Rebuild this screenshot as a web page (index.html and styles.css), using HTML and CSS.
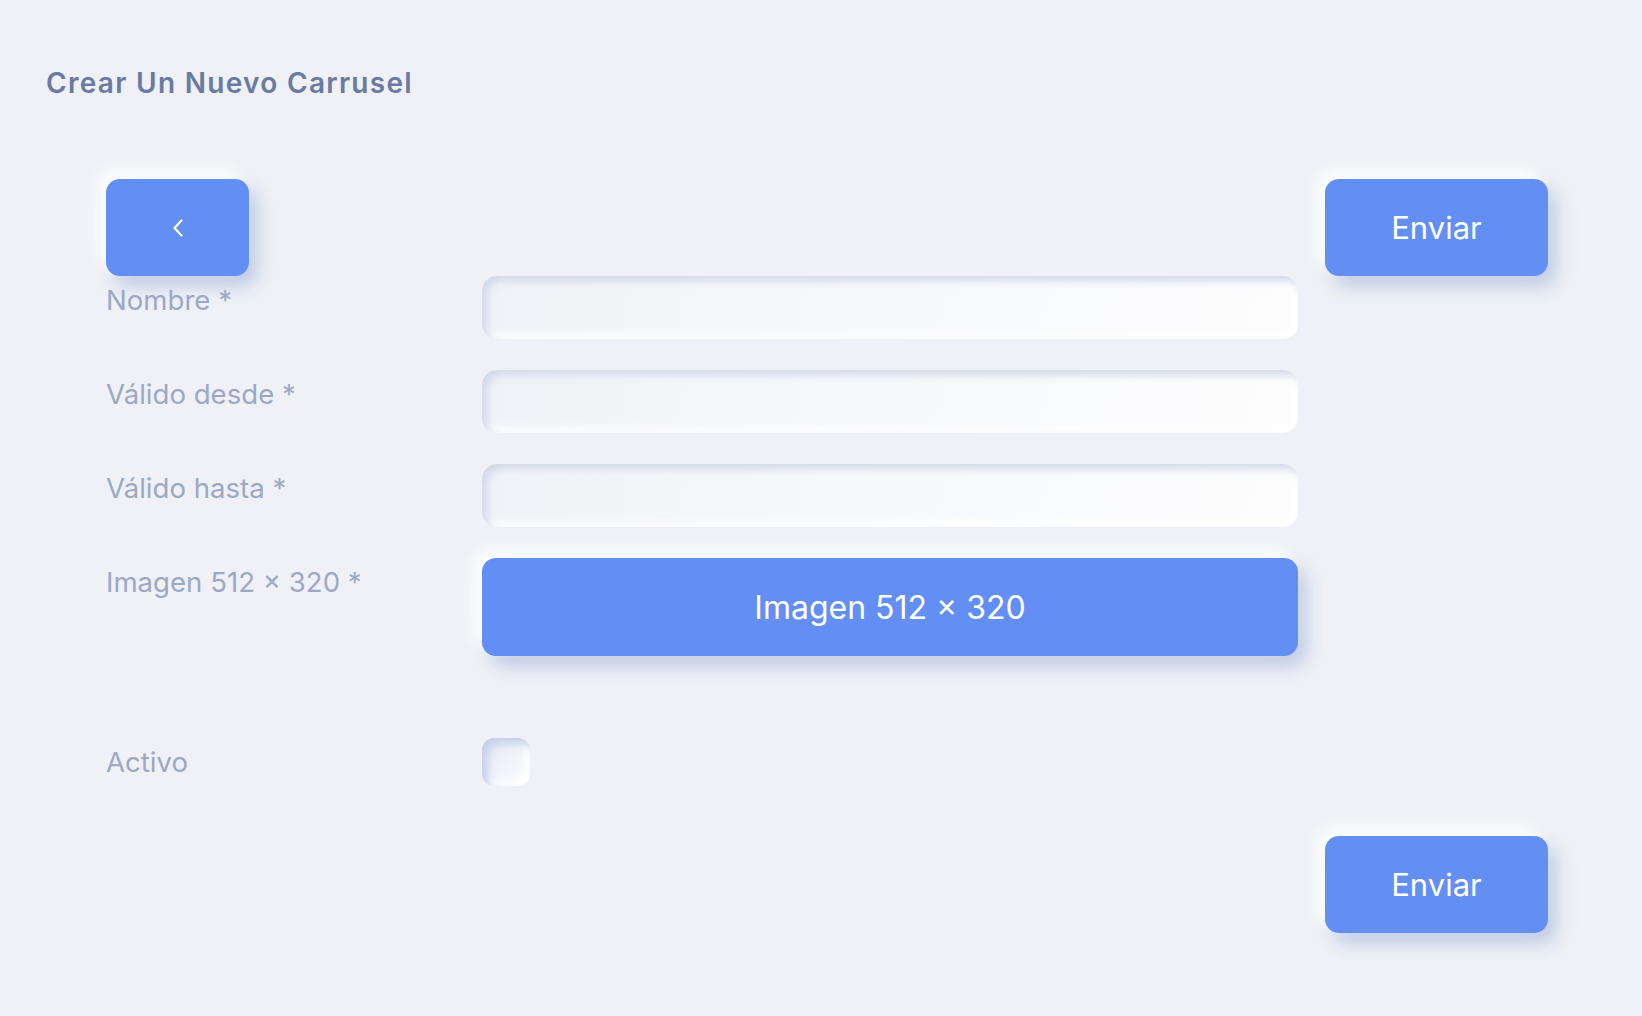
FILE: index.html
```html
<!DOCTYPE html>
<html lang="es">
<head>
<meta charset="utf-8">
<title>Crear Un Nuevo Carrusel</title>
<link rel="stylesheet" href="styles.css">
</head>
<body>
<div class="page">
  <h1 class="title">Crear Un Nuevo Carrusel</h1>
  <form class="form">
    <div class="topbar">
      <button type="button" class="btn btn-back" aria-label="Volver">
        <svg width="12" height="18" viewBox="0 0 12 18" fill="none"><path d="M9.5 1.5 L2.5 9 L9.5 16.5" stroke="#fff" stroke-width="2.2" stroke-linecap="round" stroke-linejoin="round"/></svg>
      </button>
      <button type="button" class="btn btn-send">Enviar</button>
    </div>
    <div class="rows">
      <label class="label">Nombre *</label>
      <div class="input"></div>
      <label class="label">Válido desde *</label>
      <div class="input"></div>
      <label class="label">Válido hasta *</label>
      <div class="input"></div>
      <label class="label">Imagen 512 × 320 *</label>
      <button type="button" class="btn btn-image">Imagen 512 × 320</button>
      <label class="label label-center">Activo</label>
      <div class="check-cell"><span class="checkbox"></span></div>
    </div>
    <div class="bottombar">
      <button type="button" class="btn btn-send">Enviar</button>
    </div>
  </form>
</div>
</body>
</html>
```

FILE: styles.css
```css
* { box-sizing: border-box; }
html, body {
  margin: 0;
  padding: 0;
  background: #eff1f6;
  font-family: Inter, "Noto Sans", sans-serif;
}
.page {
  padding: 62px 0 0 46px;
  min-height: 1016px;
}
.title {
  margin: 0;
  font-size: 28px;
  font-weight: 600;
  letter-spacing: 1.3px;
  color: #6b7aa2;
  line-height: 42px;
}
.form {
  margin: 75px 0 0 60px;
  width: 1442px;
}
.topbar {
  display: flex;
  justify-content: space-between;
}
.btn {
  border: none;
  background: #638ef3;
  color: #fff;
  font-family: Inter, "Noto Sans", sans-serif;
  border-radius: 14px;
  box-shadow: -8px -8px 16px #ffffff, 8px 10px 18px rgba(150, 168, 212, 0.55);
  display: flex;
  align-items: center;
  justify-content: center;
  padding: 0;
  cursor: pointer;
}
.btn-back {
  width: 143px;
  height: 97px;
}
.btn-send {
  width: 223px;
  height: 97px;
  font-size: 31px;
}
.rows {
  display: grid;
  grid-template-columns: 376px 816px;
  row-gap: 31px;
}
.label {
  font-size: 27.6px;
  color: #9ca8c5;
  line-height: 34px;
  padding-top: 7px;
}
.input {
  height: 63px;
  border-radius: 15px;
  background: linear-gradient(100deg, #f0f2f7 0%, #f8f9fb 50%, #fdfdfe 100%);
  box-shadow: inset 5px 5px 9px #d3d9e8, inset -5px -5px 9px #ffffff;
}
.btn-image {
  height: 98px;
  width: 816px;
  font-size: 32px;
}
.label-center {
  align-self: center;
  padding-top: 0;
  margin-top: 51px;
}
.check-cell {
  margin-top: 51px;
  height: 48px;
}
.checkbox {
  display: block;
  width: 48px;
  height: 48px;
  border-radius: 12px;
  background: linear-gradient(135deg, #e6eaf4, #fbfbfd);
  box-shadow: inset 6px 6px 10px #c6d0ea, inset -6px -6px 10px #ffffff;
}
.bottombar {
  display: flex;
  justify-content: flex-end;
  margin-top: 50px;
}
```
